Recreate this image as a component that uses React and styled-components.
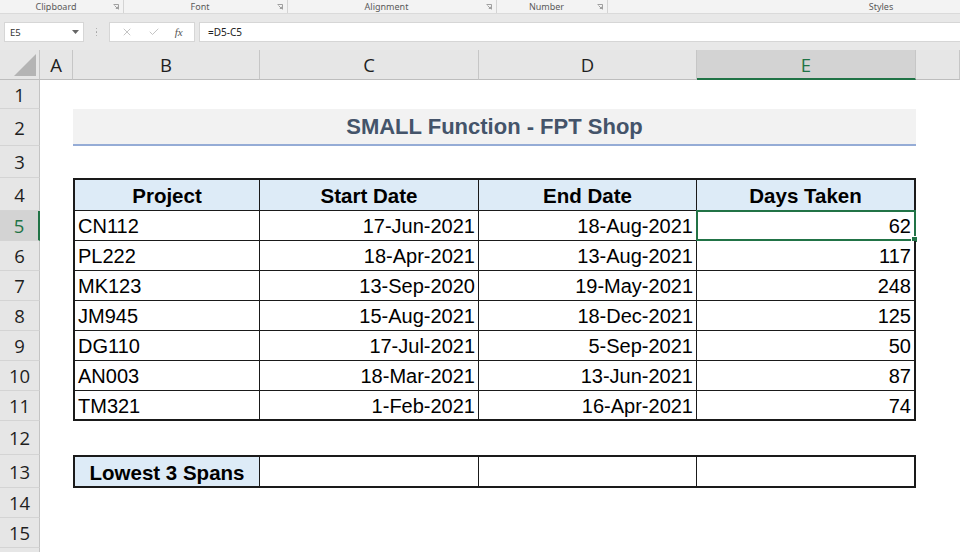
import React from 'react'
import styled, { createGlobalStyle } from 'styled-components'
import { X, Check } from 'lucide-react'

const GlobalStyle = createGlobalStyle`
  html, body { margin: 0; padding: 0; background: #ffffff; }
  body { font-family: "Liberation Sans", Arial, sans-serif; overflow: hidden; }
`

const Page = styled.div`
  width: 960px;
  height: 552px;
  overflow: hidden;
  display: flex;
  flex-direction: column;
  background: #e8e8e8;
`

/* ---------- ribbon group labels ---------- */

const Ribbon = styled.div`
  flex: 0 0 13px;
  display: flex;
  background: #f3f3f3;
  border-bottom: 1px solid #dadada;
  overflow: hidden;
`

const Group = styled.div`
  flex: 0 0 ${p => p.$w}px;
  display: flex;
  align-items: center;
  box-sizing: border-box;
  border-right: ${p => (p.$last ? 'none' : '1px solid #d4d4d4')};
`

const GroupLabel = styled.span`
  flex: 1;
  text-align: center;
  font-family: "Noto Sans", "Open Sans", sans-serif;
  font-size: 9px;
  line-height: 13px;
  color: #5a5a5a;
`

const Launcher = styled.svg`
  width: 6px;
  height: 6px;
  margin: 0 4px 0 1px;
  flex-shrink: 0;
`

/* ---------- formula bar ---------- */

const FormulaBar = styled.div`
  flex: 0 0 36px;
  box-sizing: border-box;
  display: flex;
  align-items: flex-start;
  padding: 8px 0 0 4px;
`

const NameBox = styled.div`
  width: 80px;
  height: 20px;
  box-sizing: border-box;
  background: #fff;
  border: 1px solid #d6d6d6;
  display: flex;
  align-items: center;
  justify-content: space-between;
  padding: 0 4px 0 5px;
  font-family: "Noto Sans", "Open Sans", sans-serif;
  font-size: 9.5px;
  color: #333;
`

const Dots = styled.div`
  width: 25px;
  height: 20px;
  display: flex;
  flex-direction: column;
  align-items: center;
  justify-content: center;
  gap: 2px;

  span {
    width: 1.5px;
    height: 1.5px;
    background: #a0a0a0;
    border-radius: 50%;
  }
`

const FnBox = styled.div`
  width: 86px;
  height: 20px;
  box-sizing: border-box;
  background: #fff;
  border: 1px solid #d6d6d6;
  display: flex;
  align-items: center;
  justify-content: space-around;
  padding: 0 4px;
  color: #b0b0b0;
  margin-right: 4px;
`

const Fx = styled.span`
  font-family: "Liberation Serif", serif;
  font-style: italic;
  font-size: 11px;
  color: #555;
`

const FormulaInput = styled.div`
  flex: 1;
  height: 20px;
  box-sizing: border-box;
  background: #fff;
  border-top: 1px solid #d6d6d6;
  border-bottom: 1px solid #d6d6d6;
  border-left: 1px solid #d6d6d6;
  display: flex;
  align-items: center;
  padding-left: 8px;
  font-family: "Noto Sans", "Open Sans", sans-serif;
  font-size: 10px;
  color: #222;
`

/* ---------- sheet ---------- */

const Sheet = styled.div`
  flex: 1;
  display: grid;
  grid-template-columns: 40px 33px 187px 219px 218px 219px 1fr;
  grid-template-rows: 30px 29px 37px 32px 33px repeat(7, 30px) 34px 33px 30px 30px 30px;
  background: #ffffff;
  overflow: hidden;
`

const Corner = styled.div`
  grid-row: 1;
  grid-column: 1;
  background: #e6e6e6;
  border-right: 1px solid #c4c4c4;
  border-bottom: 1px solid #bdbdbd;
  display: flex;
  align-items: flex-end;
  justify-content: flex-end;
  padding: 0 3px 3px 0;
`

const ColHead = styled.div`
  grid-row: 1;
  grid-column: ${p => p.$col};
  box-sizing: border-box;
  background: ${p => (p.$active ? '#d3d3d3' : '#e6e6e6')};
  border-right: 1px solid #c6c6c6;
  border-bottom: ${p => (p.$active ? '2px solid #217346' : '1px solid #bdbdbd')};
  color: ${p => (p.$active ? '#217346' : '#1f1f1f')};
  display: flex;
  align-items: center;
  justify-content: center;
  font-family: "Open Sans", "Noto Sans", sans-serif;
  font-size: 18.5px;
`

const RowHead = styled.div`
  grid-row: ${p => p.$row};
  grid-column: 1;
  box-sizing: border-box;
  background: ${p => (p.$active ? '#d3d3d3' : '#e6e6e6')};
  border-bottom: 1px solid #d4d4d4;
  border-right: ${p => (p.$active ? '2px solid #217346' : '1px solid #c4c4c4')};
  color: ${p => (p.$active ? '#217346' : '#1f1f1f')};
  display: flex;
  align-items: center;
  justify-content: center;
  font-family: "Open Sans", "Noto Sans", sans-serif;
  font-size: 18.5px;
`

const Title = styled.div`
  grid-row: 3;
  grid-column: 3 / 7;
  box-sizing: border-box;
  background: #f2f2f2;
  border-bottom: 2px solid #95acd6;
  display: flex;
  align-items: center;
  justify-content: center;
  font-weight: 700;
  font-size: 22px;
  color: #44546a;
`

const Cell = styled.div`
  grid-row: ${p => p.$row};
  grid-column: ${p => p.$col};
  position: relative;
  box-sizing: border-box;
  background: ${p => p.$fill || '#ffffff'};
  border-style: solid;
  border-color: #1a1a1a;
  border-width: ${p => `${p.$bt || 0}px ${p.$br || 0}px ${p.$bb || 0}px ${p.$bl || 0}px`};
  display: flex;
  align-items: center;
  justify-content: ${p => (p.$align === 'right' ? 'flex-end' : p.$align === 'center' ? 'center' : 'flex-start')};
  padding: 2px 3px 0 3px;
  font-size: ${p => (p.$bold ? '20.5px' : '20px')};
  font-weight: ${p => (p.$bold ? 700 : 400)};
  color: #000;
  white-space: nowrap;
`

const Selection = styled.div`
  position: absolute;
  inset: -1px -2px -1px -1px;
  border: 2px solid #217346;
  pointer-events: none;

  &::after {
    content: '';
    position: absolute;
    right: -4px;
    bottom: -4px;
    width: 5px;
    height: 5px;
    background: #217346;
    border: 1px solid #fff;
  }
`

const groups = [
  { name: 'Clipboard', w: 124, launcher: true },
  { name: 'Font', w: 164, launcher: true },
  { name: 'Alignment', w: 209, launcher: true },
  { name: 'Number', w: 111, launcher: true },
  { name: 'Styles', w: 546, launcher: false, last: true },
]

const columns = ['A', 'B', 'C', 'D', 'E']

const projects = [
  ['CN112', '17-Jun-2021', '18-Aug-2021', 62],
  ['PL222', '18-Apr-2021', '13-Aug-2021', 117],
  ['MK123', '13-Sep-2020', '19-May-2021', 248],
  ['JM945', '15-Aug-2021', '18-Dec-2021', 125],
  ['DG110', '17-Jul-2021', '5-Sep-2021', 50],
  ['AN003', '18-Mar-2021', '13-Jun-2021', 87],
  ['TM321', '1-Feb-2021', '16-Apr-2021', 74],
]

const heads = ['Project', 'Start Date', 'End Date', 'Days Taken']

function LauncherIcon() {
  return (
    <Launcher viewBox="0 0 6 6">
      <path d="M0.5 0.5 H5.5 V5.5" fill="none" stroke="#8a8a8a" strokeWidth="0.8" />
      <path d="M1.5 1.5 L4.5 4.5 M2.8 4.5 H4.5 V2.8" fill="none" stroke="#8a8a8a" strokeWidth="0.8" />
    </Launcher>
  )
}

export default function App() {
  // grid row index = excel row + 1 (row 1 of grid is the column header)
  const gr = r => r + 1

  return (
    <Page>
      <GlobalStyle />

      <Ribbon>
        {groups.map(g => (
          <Group key={g.name} $w={g.w} $last={g.last}>
            <GroupLabel>{g.name}</GroupLabel>
            {g.launcher && <LauncherIcon />}
          </Group>
        ))}
      </Ribbon>

      <FormulaBar>
        <NameBox>
          <span>E5</span>
          <svg width="7" height="4" viewBox="0 0 7 4">
            <path d="M0 0 H7 L3.5 4 Z" fill="#666" />
          </svg>
        </NameBox>
        <Dots>
          <span />
          <span />
          <span />
        </Dots>
        <FnBox>
          <X size={12} strokeWidth={1.5} />
          <Check size={12} strokeWidth={1.5} />
          <Fx>fx</Fx>
        </FnBox>
        <FormulaInput>=D5-C5</FormulaInput>
      </FormulaBar>

      <Sheet>
        <Corner>
          <svg width="22" height="22" viewBox="0 0 22 22">
            <path d="M22 0 V22 H0 Z" fill="#b4b4b4" />
          </svg>
        </Corner>
        {columns.map((c, i) => (
          <ColHead key={c} $col={i + 2} $active={c === 'E'}>
            {c}
          </ColHead>
        ))}
        <ColHead $col={7} />

        {Array.from({ length: 16 }, (_, i) => (
          <RowHead key={i} $row={gr(i + 1)} $active={i + 1 === 5}>
            {i + 1 <= 15 ? i + 1 : ''}
          </RowHead>
        ))}

        <Title>SMALL Function - FPT Shop</Title>

        {heads.map((h, i) => (
          <Cell
            key={h}
            $row={gr(4)}
            $col={i + 3}
            $fill="#ddebf7"
            $bold
            $align="center"
            $bt={2}
            $bb={1}
            $bl={i === 0 ? 2 : 0}
            $br={i === 3 ? 2 : 1}
          >
            {h}
          </Cell>
        ))}

        {projects.map((p, r) => {
          const last = r === projects.length - 1
          return p.map((v, i) => (
            <Cell
              key={`${r}-${i}`}
              $row={gr(5 + r)}
              $col={i + 3}
              $align={i === 0 ? 'left' : 'right'}
              $bb={last ? 2 : 1}
              $bl={i === 0 ? 2 : 0}
              $br={i === 3 ? 2 : 1}
            >
              {v}
              {r === 0 && i === 3 && <Selection />}
            </Cell>
          ))
        })}

        <Cell $row={gr(13)} $col={3} $fill="#ddebf7" $bold $align="center" $bt={2} $bb={2} $bl={2} $br={1}>
          Lowest 3 Spans
        </Cell>
        {[4, 5, 6].map(c => (
          <Cell key={c} $row={gr(13)} $col={c} $bt={2} $bb={2} $br={c === 6 ? 2 : 1} />
        ))}
      </Sheet>
    </Page>
  )
}
